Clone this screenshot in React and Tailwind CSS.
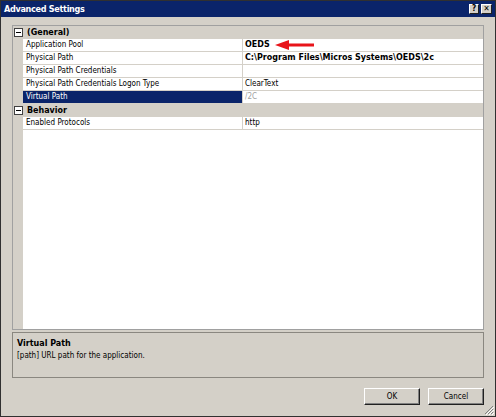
import React from 'react'

const font = { fontFamily: "'DejaVu Sans Condensed', 'DejaVu Sans', sans-serif" }
const boldFont = { fontFamily: "'DejaVu Sans', sans-serif" }

const Minus = () => (
    <div className='flex h-[9px] w-[9px] items-center justify-center border border-[#404040] bg-white'>
        <div className='h-px w-[5px] bg-black'></div>
    </div>
)

const Category = ({ name }) => (
    <div className='flex h-[13px] items-center bg-[#d4d0c8]'>
        <div className='flex w-[10px] justify-center pl-[1px]'>
            <Minus />
        </div>
        <div className='pl-[4px] font-bold text-black' style={boldFont}>{name}</div>
    </div>
)

const Row = ({ name, value, bold, selected, dim, children }) => (
    <div className='flex h-[13px]'>
        <div className='w-[10px] bg-[#d4d0c8]'></div>
        <div className={'flex w-[219px] items-center border-b border-[#d4d0c8] pl-[3px] ' + (selected ? 'bg-[#0a246a] text-white' : 'bg-white text-black')}>
            {name}
        </div>
        <div className='w-px bg-[#d4d0c8]'></div>
        <div
            className={'flex flex-1 items-center border-b border-[#d4d0c8] bg-white pl-[2px] ' + (bold ? 'font-bold ' : '') + (dim ? 'text-[#a0a0a0]' : 'text-black')}
            style={bold ? boldFont : undefined}
        >
            {value}
            {children}
        </div>
    </div>
)

const Arrow = () => (
    <svg width='40' height='10' viewBox='0 0 40 10' className='ml-[5px]'>
        <polygon points='0,5 14,0 14,10' fill='#e8141a' />
        <rect x='13' y='3.5' width='26' height='3' fill='#e8141a' />
    </svg>
)

const Button = ({ label }) => (
    <button className='flex h-[17px] w-[56px] items-center justify-center border border-t-white border-l-white border-r-[#202020] border-b-[#202020] bg-[#d4d0c8] text-black shadow-[inset_-1px_-1px_0_#808080]'>
        {label}
    </button>
)

export default function App() {
    return (
        <div className='relative flex h-[417px] w-[496px] flex-col border border-[#303030] bg-[#d4d0c8] text-[8px] leading-none' style={font}>
            <div className='flex h-[16px] items-center justify-between bg-[#0a246a] pl-[3px] pr-[3px]'>
                <span className='text-[9px] font-bold tracking-[-0.3px] text-white'>Advanced Settings</span>
                <div className='flex gap-[2px]'>
                    <div className='flex h-[10px] w-[10px] items-center justify-center border border-t-white border-l-white border-r-[#202020] border-b-[#202020] bg-[#d4d0c8] text-[8px] font-bold text-black'>?</div>
                    <div className='flex h-[10px] w-[11px] items-center justify-center border border-t-white border-l-white border-r-[#202020] border-b-[#202020] bg-[#d4d0c8] text-[8px] font-bold text-black'>✕</div>
                </div>
            </div>

            <div className='flex flex-1 flex-col px-[11px] pt-[8px]'>
                <div className='flex h-[305px] flex-col border border-[#a0a0a0] bg-white'>
                    <Category name='(General)' />
                    <Row name='Application Pool' value='OEDS' bold>
                        <Arrow />
                    </Row>
                    <Row name='Physical Path' value='C:\Program Files\Micros Systems\OEDS\2c' bold />
                    <Row name='Physical Path Credentials' value='' />
                    <Row name='Physical Path Credentials Logon Type' value='ClearText' />
                    <Row name='Virtual Path' value='/2C' selected dim />
                    <Category name='Behavior' />
                    <Row name='Enabled Protocols' value='http' />
                    <div className='flex flex-1'>
                        <div className='w-[10px] bg-[#d4d0c8]'></div>
                    </div>
                </div>

                <div className='mt-[2px] flex h-[46px] flex-col gap-[4px] border border-[#8a8780] px-[4px] pt-[7px]'>
                    <div className='font-bold text-black' style={boldFont}>Virtual Path</div>
                    <div className='text-black'>[path] URL path for the application.</div>
                </div>

                <div className='mt-[10px] flex justify-end gap-[8px]'>
                    <Button label='OK' />
                    <Button label='Cancel' />
                </div>
            </div>

            <svg width='10' height='10' viewBox='0 0 10 10' className='absolute bottom-[1px] right-[1px]'>
                <path d='M9 1 L1 9 M9 4 L4 9 M9 7 L7 9' stroke='#808080' strokeWidth='1' />
                <path d='M10 2 L2 10 M10 5 L5 10 M10 8 L8 10' stroke='#ffffff' strokeWidth='1' />
            </svg>
        </div>
    )
}
